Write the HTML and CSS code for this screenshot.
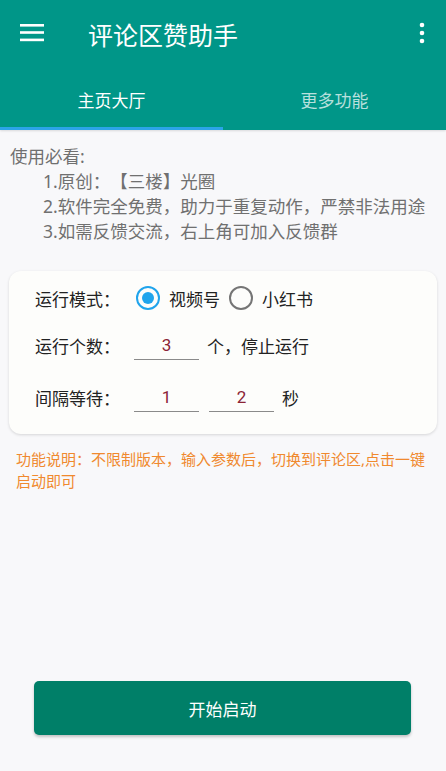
FILE: index.html
```html
<!DOCTYPE html>
<html>
<head>
  <meta charset="utf-8">
  <title>评论区赞助手</title>
  <link rel="stylesheet" href="styles.css">
</head>
<body>

<div class="page">
  <header class="appbar">
    <div class="toolbar">
      <svg class="menu-icon" width="26" height="20" viewBox="0 0 26 20">
        <rect x="1" y="1" width="24" height="2.6" fill="#fff"/>
        <rect x="1" y="8.2" width="24" height="2.6" fill="#fff"/>
        <rect x="1" y="15.6" width="24" height="2.6" fill="#fff"/>
      </svg>
      <span class="title">评论区赞助手</span>
      <svg class="more-icon" width="8" height="22" viewBox="0 0 8 22">
        <circle cx="4" cy="3" r="2.3" fill="#fff"/>
        <circle cx="4" cy="11" r="2.3" fill="#fff"/>
        <circle cx="4" cy="19" r="2.3" fill="#fff"/>
      </svg>
    </div>
    <div class="tabs">
      <div class="tab active">主页大厅</div>
      <div class="tab">更多功能</div>
    </div>
    <div class="indicator-track"><div class="indicator"></div></div>
  </header>

  <div class="notice">
    <div>使用必看:</div>
    <div class="notice-item">1.原创：【三楼】光圈</div>
    <div class="notice-item">2.软件完全免费，助力于重复动作，严禁非法用途</div>
    <div class="notice-item">3.如需反馈交流，右上角可加入反馈群</div>
  </div>

  <div class="card">
    <div class="row row-mode">
      <span class="label">运行模式：</span>
      <label class="radio"><span class="dot checked"></span>视频号</label>
      <label class="radio"><span class="dot"></span>小红书</label>
    </div>
    <div class="row row-count">
      <span class="label">运行个数：</span>
      <input class="num" type="text" value="3">
      <span class="unit">个，停止运行</span>
    </div>
    <div class="row row-wait">
      <span class="label">间隔等待：</span>
      <input class="num" type="text" value="1">
      <input class="num" type="text" value="2">
      <span class="unit">秒</span>
    </div>
  </div>

  <p class="desc">功能说明：不限制版本，输入参数后，切换到评论区,点击一键启动即可</p>

  <div class="footer">
    <button class="start-btn">开始启动</button>
  </div>
</div>

</body>
</html>
```

FILE: styles.css
```css
html, body {
  margin: 0;
  padding: 0;
}
body {
  background: #f8f8fa;
  font-family: "Noto Sans", "Noto Sans CJK SC", sans-serif;
  color: #222;
  text-spacing-trim: space-all;
}
.page {
  display: flex;
  flex-direction: column;
  min-height: 100vh;
}
.appbar {
  background: #009688;
  color: #fff;
  box-shadow: 0 1px 2px rgba(0, 0, 0, 0.12);
}
.toolbar {
  display: flex;
  align-items: center;
  height: 68px;
  padding: 0 20px 0 19px;
}
.menu-icon {
  display: block;
  margin-top: -2px;
}
.title {
  font-size: 25px;
  margin-left: 43px;
  flex: 1;
}
.more-icon {
  display: block;
  margin-top: -2px;
}
.tabs {
  display: flex;
  height: 59px;
}
.tab {
  flex: 1;
  display: flex;
  align-items: center;
  justify-content: center;
  font-size: 17px;
  padding-top: 4px;
  color: rgba(255, 255, 255, 0.72);
}
.tab.active {
  color: #fff;
}
.indicator-track {
  height: 3px;
}
.indicator {
  width: 50%;
  height: 3px;
  background: #2ba4e8;
}
.notice {
  padding: 14px 10px 0;
  font-size: 17.5px;
  line-height: 25px;
  color: #707070;
}
.notice-item {
  padding-left: 33px;
}
.card {
  margin: 27px 9px 0;
  background: #fdfdfb;
  border-radius: 12px;
  box-shadow: 0 1px 3px rgba(0, 0, 0, 0.14);
  padding: 12px 0 22px 26px;
  font-size: 17px;
}
.row {
  display: flex;
  align-items: center;
}
.row-mode {
  height: 30px;
}
.row-count {
  margin-top: 18px;
}
.row-wait {
  margin-top: 23px;
}
.label {
  width: 99px;
}
.radio {
  display: flex;
  align-items: center;
  margin-right: 9px;
}
.dot {
  box-sizing: border-box;
  width: 24px;
  height: 24px;
  border: 2.5px solid #757575;
  border-radius: 50%;
  margin: 0 9px 0 2px;
  position: relative;
}
.radio + .radio .dot {
  margin-left: 0;
}
.dot.checked {
  border-color: #20a4ec;
}
.dot.checked::after {
  content: "";
  position: absolute;
  left: 3.5px;
  top: 3.5px;
  width: 12px;
  height: 12px;
  border-radius: 50%;
  background: #20a4ec;
}
.num {
  box-sizing: border-box;
  width: 65px;
  height: 29px;
  border: none;
  border-bottom: 1.5px solid #8a8a8a;
  background: transparent;
  text-align: center;
  font-family: "Roboto", "Noto Sans CJK SC", sans-serif;
  font-size: 17px;
  color: #8b2436;
  padding: 0;
  outline: none;
}
.num + .num {
  margin-left: 10px;
}
.unit {
  margin-left: 8px;
}
.desc {
  margin: 14px 15px 0 16px;
  font-size: 15px;
  line-height: 22px;
  color: #f0892e;
}
.footer {
  margin-top: auto;
  padding: 0 35px 36px 34px;
}
.start-btn {
  display: block;
  width: 100%;
  height: 54px;
  border: none;
  border-radius: 5px;
  background: #007f68;
  color: #fff;
  font-family: "Noto Sans", "Noto Sans CJK SC", sans-serif;
  font-size: 17px;
  box-shadow: 0 2px 3px rgba(0, 0, 0, 0.22);
}
```
